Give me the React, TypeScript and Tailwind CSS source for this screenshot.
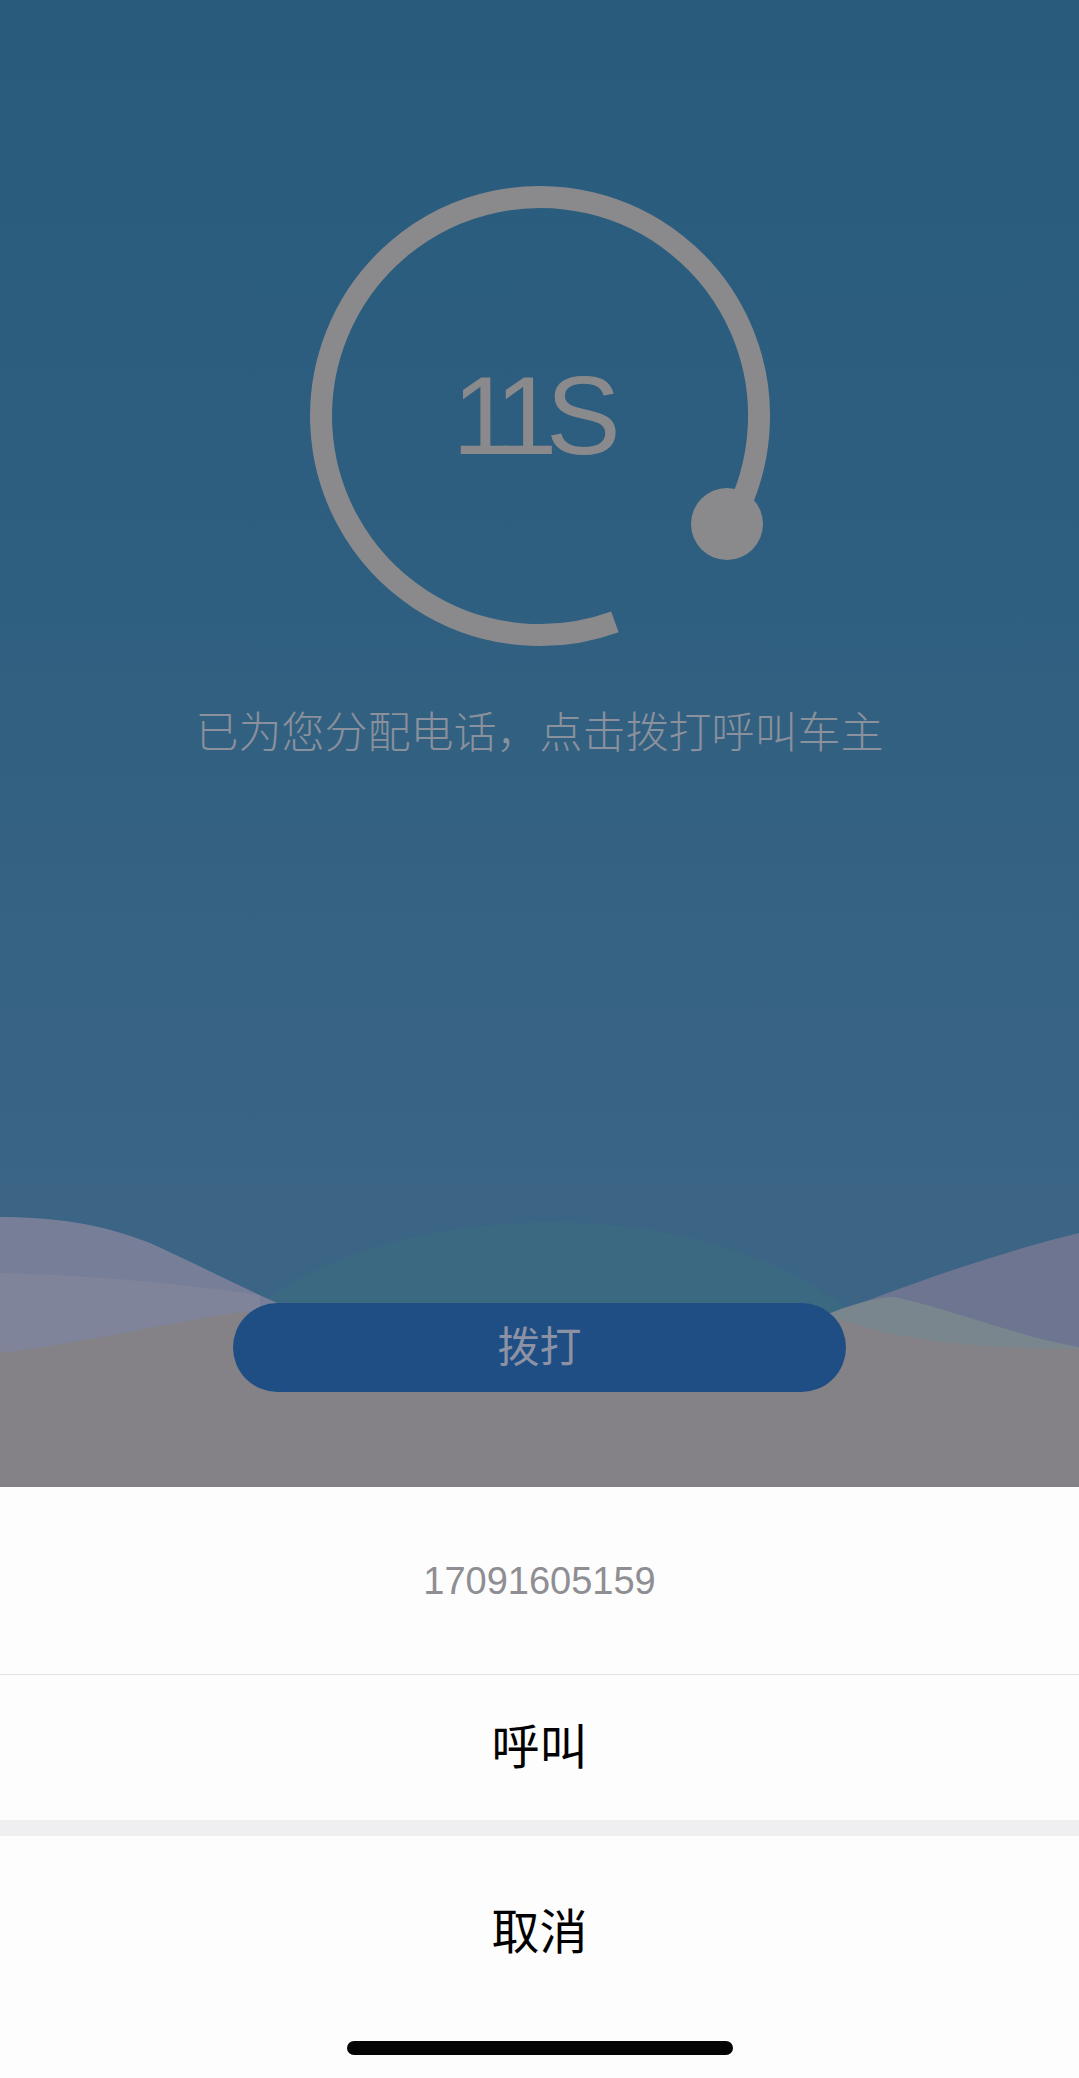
import React from "react";

function Waves() {
  // local coordinates: y_local = y_page - 1177
  return (
    <svg
      className="absolute left-0 top-[1177px] w-[1079px] h-[310px]"
      viewBox="0 0 1079 310"
      preserveAspectRatio="none"
    >
      {/* center teal hump */}
      <path
        d="M250 135 C 320 75, 440 45, 550 45 C 660 45, 780 75, 850 135 L 850 310 L 250 310 Z"
        fill="#3e6c81"
        opacity="0.65"
      />
      {/* left lavender wave */}
      <path
        d="M0 40 C 50 40, 100 46, 150 66 C 200 88, 250 116, 300 135 L 300 310 L 0 310 Z"
        fill="#767e98"
      />
      {/* left inner lighter band */}
      <path
        d="M0 96 C 80 98, 160 104, 260 118 L 260 310 L 0 310 Z"
        fill="#80849a"
      />
      {/* right lavender wave */}
      <path
        d="M800 150 C 880 118, 980 80, 1079 56 L 1079 310 L 800 310 Z"
        fill="#6e7590"
      />
      {/* right teal-grey near button */}
      <path
        d="M820 140 C 850 128, 875 120, 895 120 C 960 135, 1020 160, 1079 170 L 1079 310 L 820 310 Z"
        fill="#7a868e"
      />
      {/* bottom gray */}
      <path
        d="M0 176 C 80 166, 160 148, 240 135 L 820 135 C 880 160, 960 172, 1079 172 L 1079 310 L 0 310 Z"
        fill="#848286"
      />
    </svg>
  );
}

function Timer() {
  return (
    <div className="grid mt-[176px] w-[480px] h-[480px]">
      <svg
        className="[grid-area:1/1] w-[480px] h-[480px]"
        viewBox="0 0 480 480"
      >
        <path
          d="M314.9 445.8 A 219 219 0 1 1 429.7 349.5"
          fill="none"
          stroke="#8a8a8c"
          strokeWidth="22"
        />
        <circle cx="427" cy="348" r="36" fill="#8a8a8c" />
      </svg>
      <div className="[grid-area:1/1] self-center justify-self-center mr-[6px] text-[112px] leading-none text-[#8a8a8c] font-['Liberation_Sans',Arial,sans-serif]">
        <span className="tracking-[-0.1em]">1</span>
        <span className="tracking-[-0.1em]">1</span>
        <span>S</span>
      </div>
    </div>
  );
}

export default function App() {
  return (
    <div className="w-[1079px] h-[2078px] flex flex-col overflow-hidden">
      <div className="relative h-[1487px] shrink-0 overflow-hidden bg-[linear-gradient(180deg,#285b7c_0%,#2f5f80_40%,#3b6485_80%)]">
        <Waves />
        <div className="relative flex flex-col items-center">
          <Timer />
          <div className="mt-[52px] text-[43px] leading-none text-[#8a909c] font-light font-['Noto_Sans_CJK_SC',sans-serif]">
            已为您分配电话，点击拨打呼叫车主
          </div>
          <button className="mt-[552px] w-[613px] h-[89px] rounded-full bg-[#1f4e85] flex items-center justify-center pb-[8px] text-[42px] leading-none text-[#8c92a3] font-['Noto_Sans_CJK_SC',sans-serif]">
            拨打
          </button>
        </div>
      </div>
      <div className="flex-1 flex flex-col bg-[#fdfdfd]">
        <div className="h-[187px] flex items-center justify-center text-[38px] leading-none text-[#8e8e93] font-['Liberation_Sans',Arial,sans-serif]">
          17091605159
        </div>
        <div className="h-px bg-[#e2e2e4]" />
        <div className="h-[145px] flex items-center justify-center pb-[10px] text-[48px] leading-none text-black font-['Noto_Sans_CJK_SC',sans-serif]">
          呼叫
        </div>
        <div className="h-[16px] bg-[#efeff1]" />
        <div className="h-[194px] flex items-center justify-center pb-[10px] text-[48px] leading-none text-black font-['Noto_Sans_CJK_SC',sans-serif]">
          取消
        </div>
        <div className="flex-1 flex justify-center pt-[11px]">
          <div className="w-[386px] h-[14px] rounded-full bg-[#050505]" />
        </div>
      </div>
    </div>
  );
}
